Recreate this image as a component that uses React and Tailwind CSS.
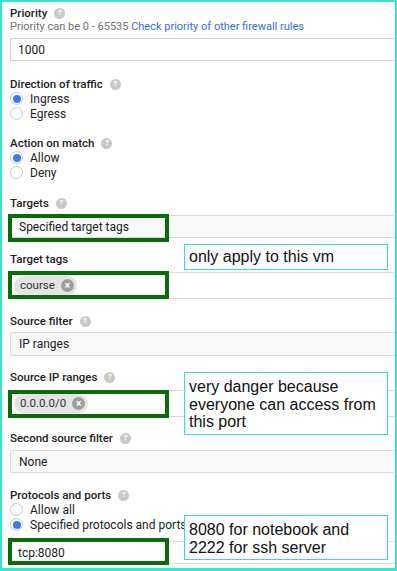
import React from "react";

const Help = () => (
  <span className="ml-[7px] inline-flex h-[11px] w-[11px] items-center justify-center rounded-full bg-[#c9c9c9] text-[8px] font-bold leading-none text-white">?</span>
);

const Label = ({ children, help = true, mt }) => (
  <div className={`flex h-[14px] items-center text-[11.5px] font-medium leading-[14px] text-[#222] ${mt}`}>
    <span>{children}</span>
    {help && <Help />}
  </div>
);

const Radio = ({ checked, children }) => (
  <div className="flex h-[15px] items-center">
    <span className={`flex h-[13px] w-[13px] items-center justify-center rounded-full border bg-white ${checked ? "border-[#b9c9e9]" : "border-[#c8c8c8]"}`}>
      {checked && <span className="h-[8px] w-[8px] rounded-full bg-[#3d7be6]" />}
    </span>
    <span className="ml-[7px] text-[12px] text-[#222]">{children}</span>
  </div>
);

const Chip = ({ children }) => (
  <span className="inline-flex h-[19px] items-center rounded-full bg-[#e4e4e4] pl-[6px] pr-[3px] text-[11.5px] text-[#333]">
    {children}
    <span className="ml-[6px] flex h-[13px] w-[13px] items-center justify-center rounded-full bg-[#9e9e9e] text-[10px] font-bold leading-none text-white">×</span>
  </span>
);

const GreenBox = ({ cls }) => (
  <div className={`pointer-events-none absolute left-[6px] w-[161px] border-[4px] border-[#0b6b0b] ${cls}`} />
);

const Note = ({ cls, children }) => (
  <div className={`absolute left-[182px] w-[204px] border border-[#3fdcc8] bg-white px-[4px] font-['Liberation_Sans',Arial,sans-serif] text-[16px] leading-[17.5px] text-[#111] ${cls}`}>
    {children}
  </div>
);

export default function App() {
  return (
    <div className="relative h-[571px] w-[397px] overflow-hidden border-x-2 border-t-2 border-b-[3px] border-[#40e0d0] bg-white font-['Roboto',sans-serif]">
      <div className="pl-[8px] pt-[4px]">
        <Label>Priority</Label>
        <div className="h-[14px] text-[11px] leading-[14px] text-[#6f6f6f]">
          Priority can be 0 - 65535 <span className="text-[#3a6fd8]">Check priority of other firewall rules</span>
        </div>
        <div className="mt-[4px] flex h-[23px] w-[400px] items-center border border-[#d4d4d4] bg-white pl-[7px] text-[12px] text-[#222]">1000</div>

        <Label mt="mt-[16px]">Direction of traffic</Label>
        <Radio checked>Ingress</Radio>
        <Radio>Egress</Radio>

        <Label mt="mt-[15px]">Action on match</Label>
        <Radio checked>Allow</Radio>
        <Radio>Deny</Radio>

        <Label mt="mt-[16px]">Targets</Label>
        <div className="mt-[5px] flex h-[23px] w-[400px] items-center rounded-[2px] border border-[#dadada] bg-[#f9f9f9] pl-[8px] text-[12px] text-[#222]">Specified target tags</div>

        <Label mt="mt-[14px]" help={false}>Target tags</Label>
        <div className="mt-[6px] flex h-[27px] w-[400px] items-center border border-[#dadada] bg-white pl-[3px]">
          <Chip>course</Chip>
        </div>

        <Label mt="mt-[15px]">Source filter</Label>
        <div className="mt-[4px] flex h-[24px] w-[400px] items-center rounded-[2px] border border-[#dadada] bg-[#f9f9f9] pl-[8px] text-[12px] text-[#222]">IP ranges</div>

        <Label mt="mt-[14px]">Source IP ranges</Label>
        <div className="mt-[6px] flex h-[27px] w-[400px] items-center border border-[#dadada] bg-white pl-[3px]">
          <Chip>0.0.0.0/0</Chip>
        </div>

        <Label mt="mt-[14px]">Second source filter</Label>
        <div className="mt-[5px] flex h-[23px] w-[400px] items-center rounded-[2px] border border-[#dadada] bg-[#f9f9f9] pl-[8px] text-[12px] text-[#222]">None</div>

        <Label mt="mt-[15px]">Protocols and ports</Label>
        <Radio>Allow all</Radio>
        <Radio checked>Specified protocols and ports</Radio>
        <div className="mt-[9px] flex h-[23px] w-[400px] items-center border border-[#dadada] bg-white pl-[7px] text-[12px] text-[#222]">tcp:8080</div>
      </div>

      <GreenBox cls="top-[212px] h-[28px]" />
      <GreenBox cls="top-[269px] h-[28px]" />
      <GreenBox cls="top-[388px] h-[28px]" />
      <GreenBox cls="top-[536px] h-[27px]" />

      <Note cls="top-[242px] h-[26px] pt-[3px]">only apply to this vm</Note>
      <Note cls="top-[370px] h-[63px] pt-[5px]">very danger because everyone can access from this port</Note>
      <Note cls="top-[513px] h-[45px] pt-[5px]">8080 for notebook and 2222 for ssh server</Note>
    </div>
  );
}
